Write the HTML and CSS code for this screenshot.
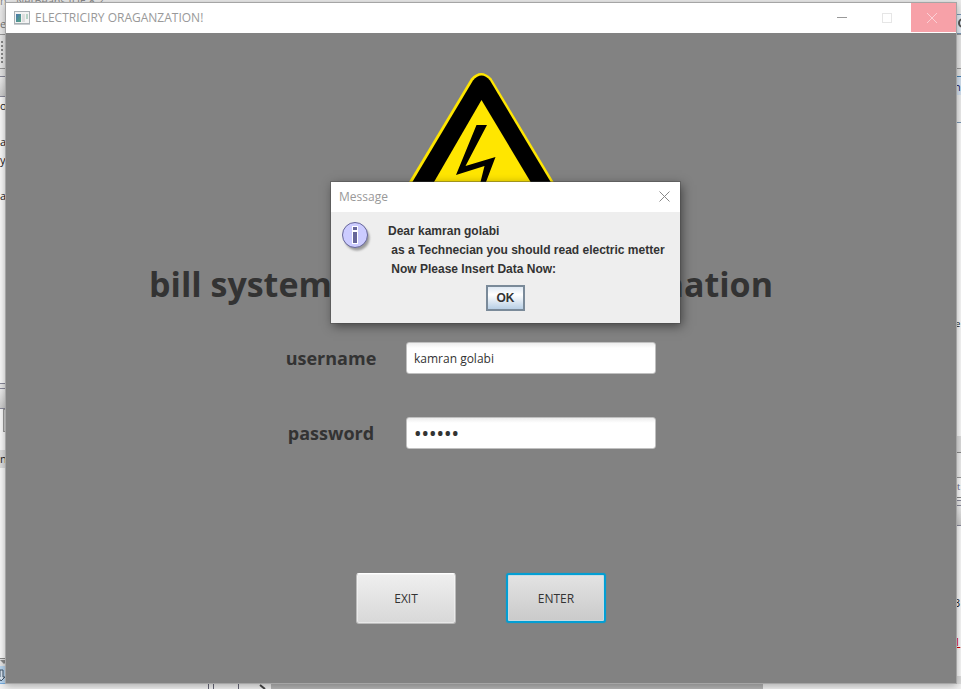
FILE: index.html
```html
<!DOCTYPE html>
<html lang="en">
<head>
<meta charset="utf-8">
<title>ELECTRICIRY ORAGANZATION!</title>
<link rel="stylesheet" href="styles.css">
</head>
<body>
<div class="desktop">
  <div class="ide" aria-hidden="true">
    <div class="ide-title">n - NetBeans IDE 8.2</div>
    <div class="ide-body">
      <div class="rail">
        <div class="row menu-row">ef</div>
        <div class="row tool-row"><span class="grip"></span></div>
        <div class="row gap-row"></div>
        <div class="row tab-row"></div>
        <div class="row tree">
          <span class="line">or</span>
          <span class="line"></span>
          <span class="line">a</span>
          <span class="line">yC</span>
          <span class="line"></span>
          <span class="line">a</span>
        </div>
        <div class="row split-row"></div>
        <div class="row tab-row"></div>
        <div class="row nav-row"><span class="nav-box"></span></div>
        <div class="row member-row">nS</div>
        <div class="row fill-row"></div>
        <div class="row scroll-row"><svg width="8" height="6" viewBox="0 0 8 6"><path d="M0 1h8L4 5z" fill="#888"/></svg></div>
        <div class="row sort-row"><svg width="20" height="18" viewBox="0 0 20 18"><path d="M0 4h3v7h2l-4 4-3-4h2z" fill="#dce8f4" stroke="#43566b"/><path d="M7 16h6" stroke="#6a5a3a" stroke-width="2"/></svg></div>
      </div>
      <div class="rail rail-right">
        <div class="row search-row"><svg width="12" height="18" viewBox="0 0 12 18"><circle cx="12" cy="8" r="4" fill="none" stroke="#555" stroke-width="2"/></svg></div>
        <div class="row tool-row"></div>
        <div class="row gap-row"></div>
        <div class="row editor-tab">n</div>
        <div class="row editor-bar"></div>
        <div class="row editor">ce</div>
        <div class="row strip-row"></div>
        <div class="row blank-row"></div>
        <div class="row output-row">et</div>
        <div class="row split-row small"></div>
        <div class="row tab-row"></div>
        <div class="row output"><span>3</span><span class="error">1</span></div>
        <div class="row status-row"></div>
      </div>
    </div>
    <div class="ide-foot">
      <span class="foot-a"></span><span class="foot-b"></span><span class="foot-c"></span>
      <span class="foot-d"><svg width="8" height="6" viewBox="0 0 8 6"><path d="M1 1l5 4" stroke="#444" stroke-width="2"/></svg></span>
      <span class="foot-e"></span>
    </div>
  </div>

  <main class="window">
    <header class="titlebar">
      <svg class="app-icon" width="16" height="14" viewBox="0 0 16 14"><defs><linearGradient id="g" x2="1" y2="1"><stop stop-color="#4a78ad"/><stop offset="1" stop-color="#57a882"/></linearGradient></defs><rect x=".5" y=".5" width="15" height="12" fill="#f3f3f3" stroke="#aab1b5"/><path d="M0 13.5h16" stroke="#c9cdd0"/><rect x="2" y="3" width="5" height="8" fill="url(#g)"/><rect x="8" y="3" width="3" height="8" fill="#dedede"/><rect x="12" y="3" width="2" height="5" fill="#b7d4c7"/></svg>
      <h1 class="window-title">ELECTRICIRY ORAGANZATION!</h1>
      <button class="win-btn" aria-label="Minimize"><svg width="10" height="10" viewBox="0 0 10 10"><path d="M0 4.5h10" stroke="#999"/></svg></button>
      <button class="win-btn" aria-label="Maximize" disabled><svg width="10" height="10" viewBox="0 0 10 10"><rect x=".5" y=".5" width="9" height="9" fill="none" stroke="#e6e6e6"/></svg></button>
      <button class="win-btn win-close" aria-label="Close"><svg width="10" height="10" viewBox="0 0 10 10"><path d="M0 0l10 10M10 0L0 10" stroke="#fbd0d5"/></svg></button>
    </header>
    <div class="content">
      <svg class="sign" width="160" height="130" viewBox="401 72 160 130">
        <path d="M471 78.500Q481 67.500 491.500 78.500L565 201H397.500z" fill="#ffe600"/>
        <path d="M473 80.500Q481.500 70.500 490 80.500L562 201H401z" fill="#000"/>
        <path d="M481.500 100L542 201H423z" fill="#ffe600"/>
        <path d="M476.500 125H487L465.500 166l30-9-9.500 25-4 14-3-2 1.500-12 4-16-28.500 9z" fill="#000"/>
      </svg>
      <h2 class="headline"><span>bill system</span><span>nation</span></h2>
      <form class="login">
        <label for="user">username</label>
        <input id="user" type="text" value="kamran golabi">
        <label for="pass">password</label>
        <input id="pass" type="password" value="123456">
      </form>
      <div class="actions">
        <button class="fx-btn" type="button">EXIT</button>
        <button class="fx-btn focused" type="button">ENTER</button>
      </div>
    </div>
  </main>

  <section class="dialog" role="dialog" aria-labelledby="dlg-title">
    <header class="dialog-bar">
      <h2 id="dlg-title">Message</h2>
      <button class="dialog-close" aria-label="Close message"><svg width="11" height="11" viewBox="0 0 11 11"><path d="M.5 .5l10 10M10.500 .5l-10 10" stroke="#888"/></svg></button>
    </header>
    <div class="dialog-body">
      <svg class="info" width="32" height="32" viewBox="0 0 32 32"><defs><filter id="s" x="-20%" y="-20%" width="150%" height="150%"><feGaussianBlur stdDeviation="1.300"/></filter></defs><circle cx="16" cy="16" r="12.500" fill="#777" opacity=".7" filter="url(#s)"/><circle cx="14" cy="13" r="12.500" fill="#ccccff" stroke="#666699"/><path d="M11 4h6v18h-6z" fill="#fff"/><path d="M12 5h4v3h-4zM12 10h4v11h-4z" fill="#666699"/></svg>
      <div class="message">
        <p>Dear kamran golabi</p>
        <p>&nbsp;as a Technecian you should read electric metter</p>
        <p>&nbsp;Now Please Insert Data Now:</p>
      </div>
    </div>
    <div class="dialog-actions"><button class="ok">OK</button></div>
  </section>
</div>
</body>
</html>
```
FILE: styles.css
```css
* { box-sizing: border-box; }

body {
  margin: 0;
  font-family: "Open Sans", "Noto Sans", sans-serif;
  font-size: 12px;
  color: #333;
}

h1, h2, p { margin: 0; }
button { font: inherit; color: inherit; padding: 0; border: 0; background: none; }
svg { display: block; }

.desktop {
  position: relative;
  display: flex;
  min-height: 100vh;
  padding: 2px 4px 5px 5px;
  overflow: hidden;
}

/* IDE behind the application window */
.ide {
  position: absolute;
  inset: 0;
  display: flex;
  flex-direction: column;
  background: #ececec;
  font-size: 11px;
  color: #222;
}
.ide-title { height: 14px; line-height: 2px; font-size: 11px; color: #888; }
.ide-body { flex: 1; display: flex; justify-content: space-between; min-height: 0; }
.ide-foot { display: flex; height: 5px; background: #f2f2f2; }
.rail { width: 20px; display: flex; flex-direction: column; background: #fafafa; }
.rail-right { width: 10px; }
.row { overflow: hidden; white-space: nowrap; flex: none; }
.menu-row { height: 20px; line-height: 20px; background: #ececec; color: #777; }
.tool-row { height: 35px; padding: 6px 1px; border-top: 1px solid #999; border-bottom: 1px solid #999; background: #e8e8e8; }
.grip { display: block; width: 2px; height: 22px; background: repeating-linear-gradient(#888 0 2px, transparent 2px 4px); }
.gap-row { height: 7px; background: #e4e4e4; }
.tab-row { height: 21px; border-top: 1px solid #889; border-bottom: 1px solid #889; background: linear-gradient(#eee, #ccc); }
.tree { height: 286px; }
.line { display: block; height: 18px; line-height: 18px; }
.split-row { height: 5px; border-top: 1px solid #889; background: #e8e8e8; }
.split-row.small { margin-top: 2px; }
.nav-row { height: 41px; padding-left: 3px; }
.nav-box { display: block; width: 10px; height: 23px; background: #ccc; border: 1px solid #999; }
.member-row { height: 18px; line-height: 18px; background: #ddd; }
.fill-row { flex: 1; }
.scroll-row { height: 8px; border-top: 1px solid #888; background: #e6e6e6; }
.sort-row { height: 18px; background: #b9d6f0; border-bottom: 1px solid #78aee0; }
.search-row { height: 20px; background: #e5edf5; border: solid #7896b4; border-width: 1px 0; }
.editor-tab { height: 19px; padding-left: 3px; line-height: 19px; color: #226; background: #d5e2f1; border-top: 1px solid #4682b4; }
.editor-bar { height: 28px; background: #eee; border-bottom: 1px solid #7896b4; }
.editor { height: 313px; padding-top: 194px; font-size: 9px; }
.strip-row { height: 17px; background: #ddd; border-bottom: 1px solid #888; }
.blank-row { height: 25px; background: #eee; border-bottom: 1px solid #999; }
.output-row { height: 20px; padding-left: 1px; line-height: 18px; font-size: 9px; color: #668; border-bottom: 1px solid #888; }
.output { flex: 1; display: flex; flex-direction: column; gap: 24px; padding: 69px 0 0 3px; }
.error { color: #d00; text-decoration: underline; }
.status-row { height: 8px; background: #ddd; }
.foot-a { width: 209px; border-right: 1px solid #667; }
.foot-b { width: 5px; border-right: 1px solid #667; }
.foot-c { width: 25px; border-right: 1px solid #667; }
.foot-d { width: 32px; padding-left: 20px; }
.foot-e { width: 492px; background: #b5b5b5; }

/* Application window */
.window {
  position: relative;
  flex: 1;
  display: flex;
  flex-direction: column;
  border: 1px solid #a5a5a5;
  background: #828282;
  box-shadow: 0 2px 8px rgba(0, 0, 0, .3);
}
.titlebar { display: flex; align-items: center; height: 30px; padding: 0 0 1px 8px; background: #fff; }
.window-title { flex: 1; margin-left: 5px; font-size: 12px; font-weight: normal; color: #999; }
.win-btn { display: grid; place-items: center; width: 45px; height: 29px; padding-right: 3px; }
.win-close { background: #f7a1a8; }
.content { flex: 1; display: flex; flex-direction: column; align-items: center; padding-top: 39px; }
.headline {
  display: flex;
  justify-content: space-between;
  width: 664px;
  padding-right: 40px;
  margin-top: 57px;
  font-size: 34px;
  font-weight: bold;
  line-height: 50px;
}
.login {
  display: grid;
  grid-template-columns: 150px 250px;
  row-gap: 43px;
  margin-top: 33px;
  padding-right: 50px;
}
.login label { font-size: 18px; font-weight: bold; line-height: 32px; text-align: center; }
.login input {
  height: 32px;
  padding: 0 7px;
  border: 1px solid #c0c0c0;
  border-radius: 3px;
  background: linear-gradient(#ededed, #fff 5px);
  font: inherit;
  color: #333;
}
.login input[type="password"] { font-family: "Noto Sans", sans-serif; font-size: 20px; }
.actions { display: flex; gap: 50px; margin-top: 124px; }
.fx-btn {
  width: 100px;
  height: 51px;
  border: 1px solid #bbb;
  border-top-color: #fff;
  border-radius: 3px;
  background: linear-gradient(#efefef, #d8d8d8);
  box-shadow: inset 0 0 0 1px rgba(255, 255, 255, .4);
}
.fx-btn.focused {
  height: 50px;
  border: 2px solid #039ed3;
  background: linear-gradient(#e3e3e3, #cacaca);
  box-shadow: 0 0 1px #039ed3, inset 0 0 0 1px #c5dce4;
}

/* Message dialog floating over the window */
.dialog {
  position: absolute;
  left: 331px;
  top: 182px;
  width: 349px;
  padding-bottom: 12px;
  background: #eee;
  box-shadow: 0 0 0 1px rgba(70, 70, 70, .4), 2px 3px 10px rgba(0, 0, 0, .5);
  font-family: "Liberation Sans", sans-serif;
  font-weight: bold;
}
.dialog-bar {
  display: flex;
  align-items: center;
  justify-content: space-between;
  height: 30px;
  padding: 0 10px 2px 8px;
  background: #fff;
}
.dialog-bar h2 { font-family: "Open Sans", sans-serif; font-size: 12px; font-weight: normal; color: #999; }
.dialog-body { display: flex; gap: 15px; padding: 10px 10px 0; }
.message { line-height: 19px; white-space: nowrap; }
.dialog-actions { display: flex; justify-content: center; margin-top: 6px; }
.ok {
  width: 39px;
  height: 26px;
  border: 2px solid #7a8a99;
  background: linear-gradient(#dfe9f3, #fff 35%, #b8cfe5);
}
```
